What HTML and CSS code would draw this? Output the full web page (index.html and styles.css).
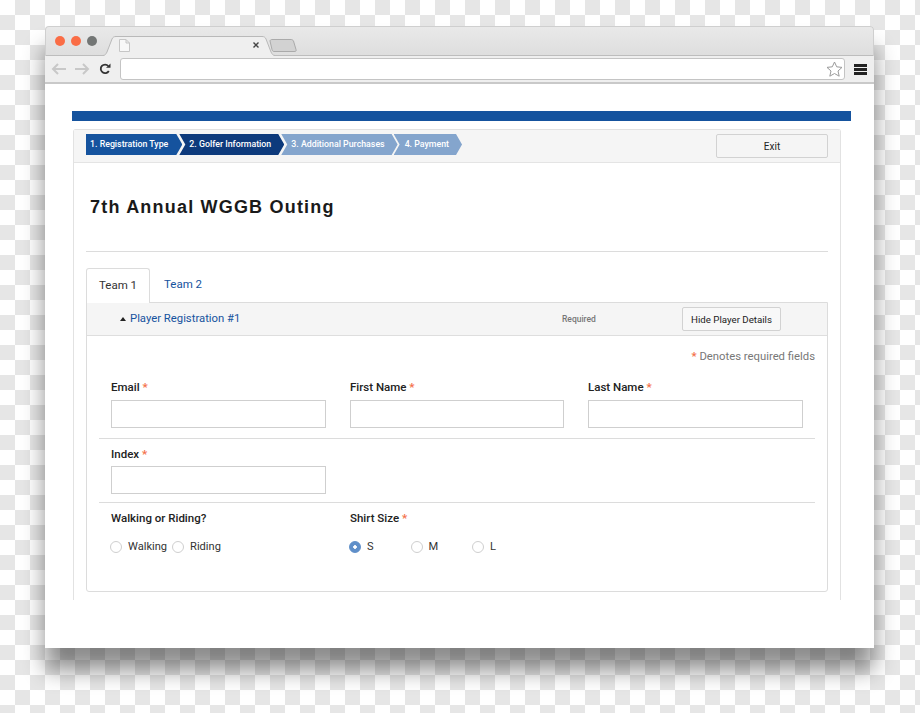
FILE: index.html
```html
<!DOCTYPE html>
<html lang="en">
<head>
    <meta charset="UTF-8">
    <meta name="viewport" content="width=device-width, initial-scale=1.0">
    <title>7th Annual WGGB Outing</title>
    <link rel="stylesheet" href="styles.css">
</head>
<body>
    <div class="browser">
        <div class="tabstrip">
            <div class="lights">
                <span class="light"></span>
                <span class="light"></span>
                <span class="light grey"></span>
            </div>
            <svg class="tabs" width="200" height="30" viewBox="0 0 200 30">
                <path d="M1 29.500C3 29.500 4 28 5 26L10 13C11 11 12 10.500 14 10.500H160C162 10.500 163 11 164 13L169 26C170 28 171 29.500 173 29.500V30H1Z" fill="#efefef"/>
                <path d="M1 29.500C3 29.500 4 28 5 26L10 13C11 11 12 10.500 14 10.500H160C162 10.500 163 11 164 13L169 26C170 28 171 29.500 173 29.500" fill="none" stroke="#b9b9b9"/>
                <path d="M168 15C168 14 169 13.500 170 13.500H189C190 13.500 191 14 191.500 15L194 23.500C194.500 25 194 25.500 192 25.500H172C171 25.500 170.500 25 170 23.500Z" fill="#d2d2d2" stroke="#aaa"/>
                <path d="M17.500 13.500H24L27.500 17V25.500H17.500Z M24 13.500V17H27.500" fill="#f8f8f8" stroke="#c6c6c6"/>
                <path d="M151.500 16.500L156.500 21.500M156.500 16.500L151.500 21.500" stroke="#444" stroke-width="1.400"/>
            </svg>
        </div>
        <div class="toolbar">
            <svg class="nav-icon" width="16" height="14" viewBox="0 0 16 14"><path d="M15 7H2M7 2L2 7L7 12" fill="none" stroke="#c8c8c8" stroke-width="2"/></svg>
            <svg class="nav-icon" width="16" height="14" viewBox="0 0 16 14"><path d="M1 7H14M9 2L14 7L9 12" fill="none" stroke="#c8c8c8" stroke-width="2"/></svg>
            <svg class="nav-icon reload" width="12" height="12" viewBox="0 0 12 12"><path d="M9.800 8A4.300 4.300 0 1 1 9.300 3" fill="none" stroke="#333" stroke-width="1.800"/><path d="M7 4.800H11.500V0.500Z" fill="#333"/></svg>
            <div class="address">
                <svg width="17" height="16" viewBox="0 0 17 16"><path d="M8.500 1L10.700 5.800L16 6.400L12 10L13.200 15.200L8.500 12.500L3.800 15.200L5 10L1 6.400L6.300 5.800Z" fill="#fff" stroke="#9a9a9a"/></svg>
            </div>
            <div class="menu"><span></span><span></span><span></span></div>
        </div>

        <div class="page">
            <div class="blue-bar"></div>
            <div class="card">
                <div class="card-head">
                    <div class="steps">
                        <div class="step done">1. Registration Type</div>
                        <div class="step current">2. Golfer Information</div>
                        <div class="step">3. Additional Purchases</div>
                        <div class="step">4. Payment</div>
                    </div>
                    <button class="btn exit">Exit</button>
                </div>
                <div class="card-body">
                    <h1>7th Annual WGGB Outing</h1>
                    <div class="tab-row">
                        <div class="team active">Team 1</div>
                        <div class="team">Team 2</div>
                    </div>
                    <div class="panel">
                        <div class="panel-head">
                            <span class="caret"></span>
                            <a class="player">Player Registration #1</a>
                            <span class="required-tag">Required</span>
                            <button class="btn hide">Hide Player Details</button>
                        </div>
                        <div class="panel-body">
                            <p class="note"><span class="star">*</span> Denotes required fields</p>
                            <div class="row first">
                                <div class="field"><label>Email <span class="star">*</span></label><input type="text"></div>
                                <div class="field"><label>First Name <span class="star">*</span></label><input type="text"></div>
                                <div class="field"><label>Last Name <span class="star">*</span></label><input type="text"></div>
                            </div>
                            <div class="row second">
                                <div class="field"><label>Index <span class="star">*</span></label><input type="text"></div>
                            </div>
                            <div class="row third">
                                <div class="field">
                                    <label>Walking or Riding?</label>
                                    <div class="radios">
                                        <span class="radio"></span><span class="radio-text">Walking</span>
                                        <span class="radio"></span><span class="radio-text">Riding</span>
                                    </div>
                                </div>
                                <div class="field">
                                    <label>Shirt Size <span class="star">*</span></label>
                                    <div class="radios">
                                        <div class="size"><span class="radio on"></span><span class="radio-text">S</span></div>
                                        <div class="size"><span class="radio"></span><span class="radio-text">M</span></div>
                                        <div class="size"><span class="radio"></span><span class="radio-text">L</span></div>
                                    </div>
                                </div>
                            </div>
                        </div>
                    </div>
                </div>
            </div>
        </div>
    </div>
</body>
</html>
```

FILE: styles.css
```css
* {
    box-sizing: border-box;
}
html, body {
    height: 713px;
    overflow: hidden;
}
body {
    margin: 0;
    padding: 26px 46px 0 45px;
    font-family: Roboto, "Liberation Sans", sans-serif;
    color: #222;
    background-color: #fff;
    background-image: conic-gradient(#e6e6e6 25%, #fff 0 50%, #e6e6e6 0 75%, #fff 0);
    background-size: 30px 30px;
}
.browser {
    width: 829px;
    height: 622px;
    display: flex;
    flex-direction: column;
    background: #fff;
    border-radius: 4px 4px 0 0;
    box-shadow: 0 22px 22px rgba(0, 0, 0, 0.45);
}
.tabstrip {
    height: 30px;
    display: flex;
    background: linear-gradient(#e9e9e9, #dedede calc(100% - 1px), #bdbdbd 0);
    border-radius: 4px 4px 0 0;
    border: 1px solid #cfcfcf;
    border-bottom: none;
}
.lights {
    width: 54px;
    height: 29px;
    padding: 9px 0 0 9px;
    display: flex;
    gap: 6px;
    flex: none;
}
.light {
    width: 10px;
    height: 10px;
    border-radius: 50%;
    background: #fa6d46;
}
.light.grey {
    background: #737675;
}
.tabs {
    flex: none;
    margin-top: -1px;
    margin-left: 2px;
}
.toolbar {
    height: 28px;
    display: flex;
    align-items: center;
    padding-left: 6px;
    background: #efefef;
    border-bottom: 2px solid #c9c9c9;
}
.nav-icon {
    margin-right: 7px;
    flex: none;
}
.reload {
    margin-left: 2px;
    margin-right: 9px;
}
.address {
    width: 725px;
    height: 22px;
    display: flex;
    align-items: center;
    justify-content: flex-end;
    padding-right: 1px;
    background: #fff;
    border: 1px solid #c4c4c4;
    border-radius: 3px;
    flex: none;
}
.menu {
    margin-left: 9px;
    display: flex;
    flex-direction: column;
    gap: 1px;
}
.menu span {
    display: block;
    width: 13px;
    height: 3px;
    background: #222;
}
.page {
    flex: 1;
    padding: 27px 23px 0 27px;
}
.blue-bar {
    height: 10px;
    background: #15539e;
}
.card {
    margin: 8px 10px 0 1px;
    height: 471px;
    border: 1px solid #e2e2e2;
    border-bottom: none;
    border-radius: 3px 3px 0 0;
}
.card-head {
    height: 33px;
    padding: 4px 12px 0 12px;
    display: flex;
    justify-content: space-between;
    align-items: flex-start;
    background: #f5f5f5;
    border-bottom: 1px solid #e4e4e4;
}
.steps {
    display: flex;
}
.step {
    height: 21px;
    line-height: 21px;
    padding: 0 13px 0 10px;
    margin-left: -3px;
    font-size: 8.800px;
    font-weight: 500;
    color: #fff;
    background: #84a5cd;
    white-space: nowrap;
    clip-path: polygon(0 0, calc(100% - 6px) 0, 100% 50%, calc(100% - 6px) 100%, 0 100%, 6px 50%);
}
.step:last-child {
    margin-left: -4px;
    padding-left: 11px;
}
.step.done {
    background: #15539e;
    margin-left: 0;
    padding: 0 14px 0 4px;
    clip-path: polygon(0 0, calc(100% - 6px) 0, 100% 50%, calc(100% - 6px) 100%, 0 100%);
}
.step.current {
    background: #0d3a7c;
}
.btn {
    font-family: Roboto, "Liberation Sans", sans-serif;
    color: #222;
    background: #f5f5f5;
    border: 1px solid #d2d2d2;
    border-radius: 2px;
}
.exit {
    width: 112px;
    height: 24px;
    font-size: 10px;
}
.card-body {
    padding: 0 12px;
}
h1 {
    margin: 0;
    height: 89px;
    padding: 34px 0 0 4px;
    font-family: "Liberation Sans", Arial, sans-serif;
    font-size: 18px;
    line-height: 21px;
    font-weight: 700;
    letter-spacing: 1.200px;
    color: #1a1a1a;
    border-bottom: 1px solid #dcdcdc;
}
.tab-row {
    margin-top: 16px;
    height: 34px;
    display: flex;
}
.team {
    height: 34px;
    padding: 0 14px;
    line-height: 33px;
    font-size: 11.500px;
    white-space: nowrap;
    color: #15539e;
}
.team.active {
    position: relative;
    z-index: 1;
    width: 64px;
    height: 35px;
    padding: 0 12px;
    color: #333;
    background: #fff;
    border: 1px solid #dcdcdc;
    border-bottom: none;
    border-radius: 3px 3px 0 0;
}
.panel {
    height: 290px;
    border: 1px solid #dcdcdc;
    border-radius: 0 0 3px 3px;
}
.panel-head {
    height: 33px;
    display: flex;
    align-items: center;
    padding-left: 33px;
    background: #f5f5f5;
    border-bottom: 1px solid #dedede;
}
.caret {
    width: 0;
    height: 0;
    border: 3.500px solid transparent;
    border-top: none;
    border-bottom: 4px solid #222;
    margin-right: 4px;
}
.player {
    width: 432px;
    margin-top: -2px;
    font-size: 11.300px;
    color: #15539e;
}
.required-tag {
    width: 120px;
    font-size: 8.500px;
    font-weight: 500;
    color: #777;
}
.hide {
    width: 99px;
    height: 24px;
    padding: 0;
    font-size: 9.700px;
    background: #f8f8f8;
}
.panel-body {
    padding: 0 12px;
}
.note {
    margin: 0;
    height: 40px;
    padding-top: 14px;
    text-align: right;
    font-size: 11.300px;
    line-height: 14px;
    color: #777;
}
.star {
    color: #f4714a;
    font-weight: 700;
}
.row {
    display: grid;
    grid-template-columns: 215px 214px 215px;
    column-gap: 24px;
    padding: 0 12px;
    border-bottom: 1px solid #dcdcdc;
}
.row.first {
    height: 63px;
    padding-top: 4px;
}
.row.second {
    height: 64px;
    padding-top: 8px;
}
.row.third {
    height: 60px;
    padding-top: 8px;
    border-bottom: none;
}
.field label {
    display: block;
    height: 20px;
    font-size: 11.500px;
    line-height: 14px;
    font-weight: 500;
    color: #222;
}
.row.second label {
    height: 19px;
}
.field input {
    display: block;
    width: 100%;
    height: 28px;
    border: 1px solid #cfcfcf;
    background: #fff;
    border-radius: 0;
}
.radios {
    margin: 9px 0 0 -1px;
    display: flex;
    align-items: center;
}
.radio {
    width: 12px;
    height: 12px;
    border: 1px solid #cfcfcf;
    border-radius: 50%;
    background: #fff;
    margin-right: 6px;
    flex: none;
}
.radio.on {
    border-color: #5f8fc9;
    background: radial-gradient(circle, #fff 1.500px, #5f8fc9 2px);
}
.radio-text {
    font-size: 11.100px;
    color: #333;
    margin-right: 5px;
}
.size {
    width: 61.500px;
    display: flex;
    align-items: center;
}
```
